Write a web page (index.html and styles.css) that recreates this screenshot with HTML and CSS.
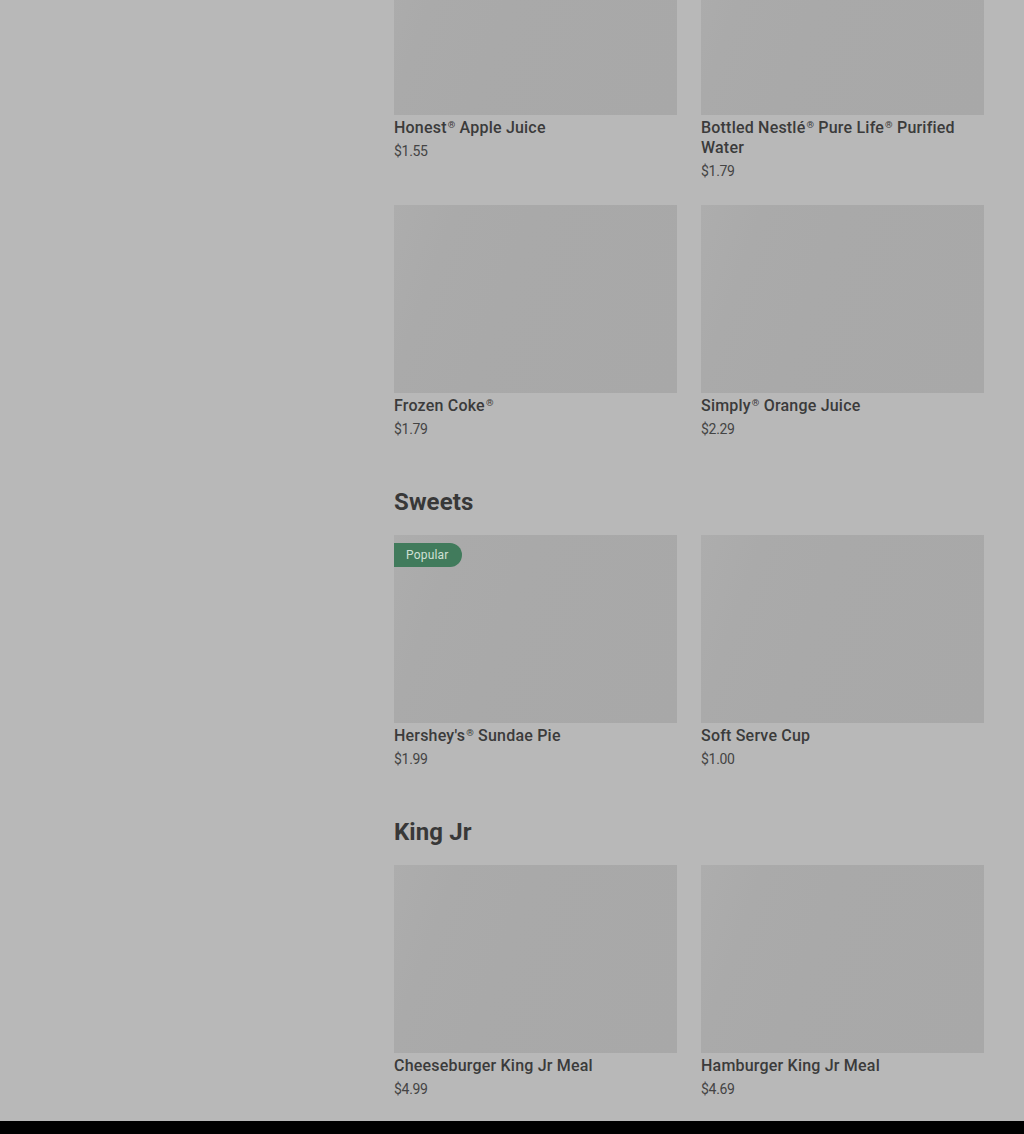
FILE: index.html
```html
<!DOCTYPE html>
<html lang="en">
<head>
    <meta charset="UTF-8">
    <meta name="viewport" content="width=device-width, initial-scale=1.0">
    <title>Menu</title>
    <link rel="stylesheet" href="styles.css">
</head>
<body>
    <div class="page">
        <aside class="side"></aside>

        <main class="menu">
            <section class="menu-section first">
                <div class="card-grid">
                    <div class="card">
                        <div class="thumb"></div>
                        <h3 class="card-name">Honest<span class="reg">®</span> Apple Juice</h3>
                        <p class="card-price">$1.55</p>
                    </div>
                    <div class="card">
                        <div class="thumb"></div>
                        <h3 class="card-name">Bottled Nestlé<span class="reg">®</span> Pure Life<span class="reg">®</span> Purified Water</h3>
                        <p class="card-price">$1.79</p>
                    </div>
                    <div class="card">
                        <div class="thumb"></div>
                        <h3 class="card-name">Frozen Coke<span class="reg">®</span></h3>
                        <p class="card-price">$1.79</p>
                    </div>
                    <div class="card">
                        <div class="thumb"></div>
                        <h3 class="card-name">Simply<span class="reg">®</span> Orange Juice</h3>
                        <p class="card-price">$2.29</p>
                    </div>
                </div>
            </section>

            <section class="menu-section">
                <h2 class="section-title">Sweets</h2>
                <div class="card-grid">
                    <div class="card">
                        <div class="thumb">
                            <span class="badge">Popular</span>
                        </div>
                        <h3 class="card-name">Hershey's<span class="reg">®</span> Sundae Pie</h3>
                        <p class="card-price">$1.99</p>
                    </div>
                    <div class="card">
                        <div class="thumb"></div>
                        <h3 class="card-name">Soft Serve Cup</h3>
                        <p class="card-price">$1.00</p>
                    </div>
                </div>
            </section>

            <section class="menu-section">
                <h2 class="section-title">King Jr</h2>
                <div class="card-grid">
                    <div class="card">
                        <div class="thumb"></div>
                        <h3 class="card-name">Cheeseburger King Jr Meal</h3>
                        <p class="card-price">$4.99</p>
                    </div>
                    <div class="card">
                        <div class="thumb"></div>
                        <h3 class="card-name">Hamburger King Jr Meal</h3>
                        <p class="card-price">$4.69</p>
                    </div>
                </div>
            </section>
        </main>
    </div>

    <footer class="footer"></footer>
</body>
</html>
```

FILE: styles.css
```css
*{
    margin: 0;
    padding: 0;
    box-sizing: border-box;
}

body{
    background-color: #b8b8b8;
    font-family: Roboto, "Noto Sans", sans-serif;
    color: #3b3b3b;
    overflow: hidden;
}

.page{
    display: grid;
    grid-template-columns: 394px 590px;
    padding-bottom: 22px;
}

.menu{
    display: flex;
    flex-direction: column;
}

.menu-section{
    padding-top: 47px;
}

/* page is scrolled: first row starts above the top edge */
.menu-section.first{
    padding-top: 0;
    margin-top: -73px;
}

.section-title{
    font-size: 24px;
    line-height: 32px;
    font-weight: 700;
    color: #383838;
    margin-bottom: 17px;
    letter-spacing: 0.1px;
}

.card-grid{
    display: grid;
    grid-template-columns: 283px 283px;
    column-gap: 24px;
    row-gap: 24px;
}

.thumb{
    position: relative;
    height: 188px;
    background: linear-gradient(110deg, #adadad 0%, #aaaaaa 18%, #a9a9a9 40%, #a8a8a8 100%);
}

.badge{
    position: absolute;
    top: 8px;
    left: 0;
    height: 24px;
    padding: 0 13px 0 12px;
    display: flex;
    align-items: center;
    background-color: #417b5c;
    color: #cfe0d5;
    font-size: 12px;
    letter-spacing: 0.2px;
    border-radius: 0 12px 12px 0;
}

.card-name{
    margin-top: 3px;
    font-size: 16px;
    line-height: 20px;
    font-weight: 500;
    color: #3b3b3b;
    letter-spacing: 0.2px;
}

.reg{
    font-size: 0.6em;
    vertical-align: 0.5em;
    line-height: 1;
    margin-left: 1px;
}

.card-price{
    margin-top: 3px;
    font-size: 14px;
    line-height: 20px;
    color: #444;
    letter-spacing: -0.3px;
}

.footer{
    height: 40px;
    background-color: #000;
}
```
